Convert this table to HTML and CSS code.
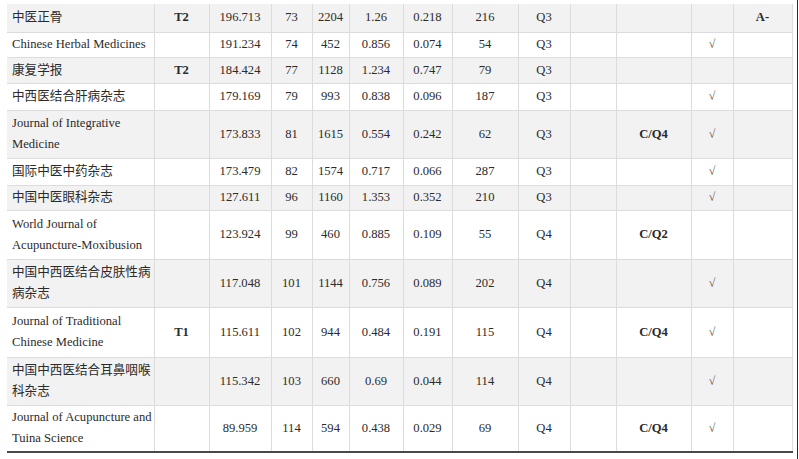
FILE: index.html
```html
<!DOCTYPE html>
<html lang="zh">
<head>
<meta charset="utf-8">
<link rel="stylesheet" href="styles.css">
</head>
<body>
<div class="page">
<table class="tbl">
<colgroup>
<col class="c1"><col class="c2"><col class="c3"><col class="c4"><col class="c5"><col class="c6"><col class="c7"><col class="c8"><col class="c9"><col class="c10"><col class="c11"><col class="c12"><col class="c13">
</colgroup>
<tbody>
<tr class="g r28"><td class="name">中医正骨</td><td class="b">T2</td><td>196.713</td><td>73</td><td>2204</td><td>1.26</td><td>0.218</td><td>216</td><td>Q3</td><td></td><td></td><td></td><td class="b">A-</td></tr>
<tr class="w r25"><td class="name">Chinese Herbal Medicines</td><td></td><td>191.234</td><td>74</td><td>452</td><td>0.856</td><td>0.074</td><td>54</td><td>Q3</td><td></td><td></td><td class="ck">√</td><td></td></tr>
<tr class="g r26"><td class="name">康复学报</td><td class="b">T2</td><td>184.424</td><td>77</td><td>1128</td><td>1.234</td><td>0.747</td><td>79</td><td>Q3</td><td></td><td></td><td></td><td></td></tr>
<tr class="w r27"><td class="name">中西医结合肝病杂志</td><td></td><td>179.169</td><td>79</td><td>993</td><td>0.838</td><td>0.096</td><td>187</td><td>Q3</td><td></td><td></td><td class="ck">√</td><td></td></tr>
<tr class="g r48"><td class="name">Journal of Integrative<br>Medicine</td><td></td><td>173.833</td><td>81</td><td>1615</td><td>0.554</td><td>0.242</td><td>62</td><td>Q3</td><td></td><td class="b">C/Q4</td><td class="ck">√</td><td></td></tr>
<tr class="w r27"><td class="name">国际中医中药杂志</td><td></td><td>173.479</td><td>82</td><td>1574</td><td>0.717</td><td>0.066</td><td>287</td><td>Q3</td><td></td><td></td><td class="ck">√</td><td></td></tr>
<tr class="g r25"><td class="name">中国中医眼科杂志</td><td></td><td>127.611</td><td>96</td><td>1160</td><td>1.353</td><td>0.352</td><td>210</td><td>Q3</td><td></td><td></td><td class="ck">√</td><td></td></tr>
<tr class="w r49"><td class="name">World Journal of<br>Acupuncture-Moxibusion</td><td></td><td>123.924</td><td>99</td><td>460</td><td>0.885</td><td>0.109</td><td>55</td><td>Q4</td><td></td><td class="b">C/Q2</td><td></td><td></td></tr>
<tr class="g r48"><td class="name">中国中西医结合皮肤性病<br>病杂志</td><td></td><td>117.048</td><td>101</td><td>1144</td><td>0.756</td><td>0.089</td><td>202</td><td>Q4</td><td></td><td></td><td class="ck">√</td><td></td></tr>
<tr class="w r50"><td class="name">Journal of Traditional<br>Chinese Medicine</td><td class="b">T1</td><td>115.611</td><td>102</td><td>944</td><td>0.484</td><td>0.191</td><td>115</td><td>Q4</td><td></td><td class="b">C/Q4</td><td class="ck">√</td><td></td></tr>
<tr class="g r48"><td class="name">中国中西医结合耳鼻咽喉<br>科杂志</td><td></td><td>115.342</td><td>103</td><td>660</td><td>0.69</td><td>0.044</td><td>114</td><td>Q4</td><td></td><td></td><td class="ck">√</td><td></td></tr>
<tr class="w r47 last"><td class="name">Journal of Acupuncture and<br>Tuina Science</td><td></td><td>89.959</td><td>114</td><td>594</td><td>0.438</td><td>0.029</td><td>69</td><td>Q4</td><td></td><td class="b">C/Q4</td><td class="ck">√</td><td></td></tr>
</tbody>
</table>
</div>
</body>
</html>
```
FILE: styles.css
```css
html, body {
  margin: 0;
  padding: 0;
  background: #fff;
}
.page {
  width: 798px;
  height: 459px;
  border-right: 1px solid #2a2a2a;
  padding: 4px 0 0 7px;
  box-sizing: border-box;
  overflow: hidden;
}
.tbl {
  border-collapse: collapse;
  table-layout: fixed;
  width: 785px;
  font-family: "Liberation Serif", "Noto Sans CJK SC", serif;
  font-size: 12.6px;
  line-height: 21px;
  color: #2b2b2b;
}
.c1 { width: 147px; }
.c2 { width: 55px; }
.c3 { width: 62px; }
.c4 { width: 41px; }
.c5 { width: 37px; }
.c6 { width: 54px; }
.c7 { width: 49px; }
.c8 { width: 66px; }
.c9 { width: 52px; }
.c10 { width: 46px; }
.c11 { width: 75px; }
.c12 { width: 42px; }
.c13 { width: 59px; }
.tbl td {
  border: 1px solid #dcdcdc;
  padding: 0;
  text-align: center;
  vertical-align: middle;
  white-space: nowrap;
  overflow: hidden;
}
.tbl tr:first-child td { border-top: none; }
.tbl td:first-child { border-left: none; }
.tbl td.name {
  text-align: left;
  padding-left: 5px;
}
.tbl td.b { font-weight: bold; }
.tbl td.ck { color: #555; font-size: 12px; }
.g { background: #f2f2f2; }
.w { background: #fff; }
.r25 { height: 25px; }
.r26 { height: 26px; }
.r27 { height: 27px; }
.r28 { height: 28px; }
.r47 { height: 47px; }
.r48 { height: 48px; }
.r49 { height: 49px; }
.r50 { height: 50px; }
.tbl tr.last td { border-bottom: 2px solid #4a4a4a; }
```
